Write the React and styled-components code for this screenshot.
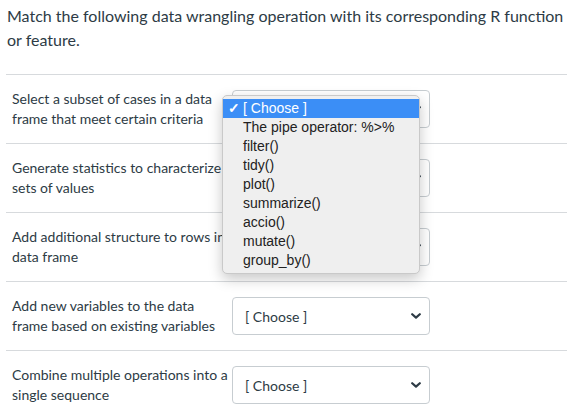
import React from "react";
import styled, { createGlobalStyle } from "styled-components";

const Global = createGlobalStyle`
  html, body { margin: 0; padding: 0; background: #fff; }
  body { font-family: Lato, "Open Sans", sans-serif; color: #2d3b45; }
`;

const Page = styled.div`
  width: 576px;
  box-sizing: border-box;
  padding: 4px 9px 0 6px;
`;

const Question = styled.p`
  margin: 0 0 22px 1px;
  font-size: 16px;
  line-height: 24px;
  color: #2d3b45;
`;

const Row = styled.div`
  display: flex;
  align-items: center;
  border-top: 1px solid #d7dadd;
  padding: 15px 0 15px 6px;
  height: 38px;
`;

const Label = styled.div`
  width: 216px;
  flex: none;
  margin-right: 4px;
  font-size: 14px;
  line-height: 20px;
  color: #2d3b45;
`;

const SelectWrap = styled.div`
  position: relative;
  flex: none;
`;

const SelectBox = styled.div`
  box-sizing: border-box;
  width: 198px;
  height: 38px;
  border: 1px solid #c7cdd1;
  border-radius: 4px;
  background: #fff;
  display: flex;
  align-items: center;
  justify-content: space-between;
  padding: 0 4px 0 12px;
  font-size: 14px;
  color: #2d3b45;
`;

const Menu = styled.div`
  position: absolute;
  left: -10px;
  top: 5px;
  width: 198px;
  box-sizing: border-box;
  background: #efefef;
  border: 1px solid #c9c9c9;
  border-radius: 5px;
  box-shadow: 0 5px 14px rgba(0, 0, 0, 0.22);
  padding: 3px 0 3px;
  z-index: 10;
  font-family: "Liberation Sans", Arial, sans-serif;
  font-size: 14px;
`;

const Item = styled.div`
  position: relative;
  height: 19px;
  line-height: 19px;
  padding-left: 20px;
  color: ${(p) => (p.$active ? "#fff" : "#222")};
  background: ${(p) => (p.$active ? "#3b8ef6" : "transparent")};
  white-space: nowrap;
`;

const Check = styled.span`
  position: absolute;
  left: 5px;
  top: 0;
  font-size: 14px;
  font-weight: bold;
`;

const Chevron = () => (
  <svg width="10" height="6" viewBox="0 0 10 6" style={{ marginRight: 4 }}>
    <polyline
      points="1.2,1.2 5,4.6 8.8,1.2"
      fill="none"
      stroke="#2d3b45"
      strokeWidth="2.2"
      strokeLinecap="round"
      strokeLinejoin="round"
    />
  </svg>
);

const rows = [
  "Select a subset of cases in a data frame that meet certain criteria",
  "Generate statistics to characterize sets of values",
  "Add additional structure to rows in data frame",
  "Add new variables to the data frame based on existing variables",
  "Combine multiple operations into a single sequence",
];

const options = [
  "[ Choose ]",
  "The pipe operator: %>%",
  "filter()",
  "tidy()",
  "plot()",
  "summarize()",
  "accio()",
  "mutate()",
  "group_by()",
];

export default function App() {
  return (
    <>
      <Global />
      <Page>
        <Question>
          Match the following data wrangling operation with its corresponding R
          function or feature.
        </Question>
        {rows.map((r, i) => (
          <Row key={i}>
            <Label>{r}</Label>
            <SelectWrap>
              <SelectBox>
                <span>[ Choose ]</span>
                <Chevron />
              </SelectBox>
              {i === 0 && (
                <Menu>
                  {options.map((o, j) => (
                    <Item key={j} $active={j === 0}>
                      {j === 0 && <Check>✓</Check>}
                      {o}
                    </Item>
                  ))}
                </Menu>
              )}
            </SelectWrap>
          </Row>
        ))}
      </Page>
    </>
  );
}
